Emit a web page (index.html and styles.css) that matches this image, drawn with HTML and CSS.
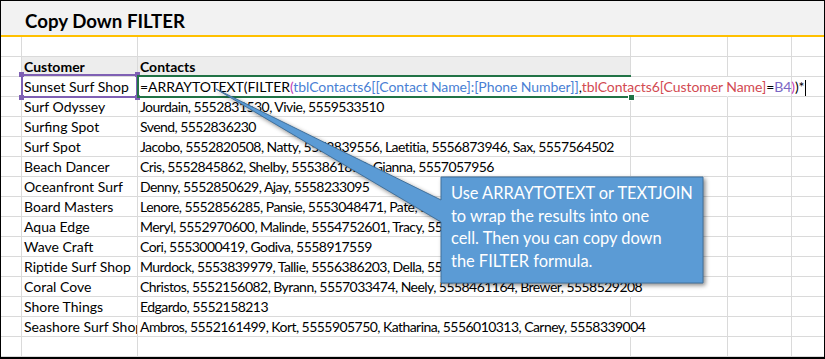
FILE: index.html
```html
<!DOCTYPE html>
<html>
<head>
<meta charset="utf-8">
<link rel="stylesheet" href="styles.css">
</head>
<body>
<div class="sheet">
  <div class="title">Copy Down FILTER</div>
  <div class="grid">
    <div class="row"><div class="c a"></div><div class="c b"></div><div class="c cc"></div><div class="c d"></div><div class="c e"></div><div class="c f"></div></div>
    <div class="row head"><div class="c a"></div><div class="c b">Customer</div><div class="c cc">Contacts</div><div class="c d"></div><div class="c e"></div><div class="c f"></div></div>
    <div class="row"><div class="c a"></div><div class="c b">Sunset Surf Shop</div><div class="c cc spill"><span class="formula">=ARRAYTOTEXT(FILTER<span class="pk">(</span><span class="bl">tblContacts6[[Contact Name]:[Phone Number]]</span>,<span class="rd">tblContacts6[Customer Name]</span>=<span class="pu">B4</span><span class="pk">)</span>)*</span><span class="cursor"></span></div><div class="c d spill"></div><div class="c e"></div><div class="c f"></div></div>
    <div class="row"><div class="c a"></div><div class="c b">Surf Odyssey</div><div class="c cc">Jourdain, 5552831530, Vivie, 5559533510</div><div class="c d"></div><div class="c e"></div><div class="c f"></div></div>
    <div class="row"><div class="c a"></div><div class="c b">Surfing Spot</div><div class="c cc">Svend, 5552836230</div><div class="c d"></div><div class="c e"></div><div class="c f"></div></div>
    <div class="row"><div class="c a"></div><div class="c b">Surf Spot</div><div class="c cc">Jacobo, 5552820508, Natty, 5552839556, Laetitia, 5556873946, Sax, 5557564502</div><div class="c d"></div><div class="c e"></div><div class="c f"></div></div>
    <div class="row"><div class="c a"></div><div class="c b">Beach Dancer</div><div class="c cc">Cris, 5552845862, Shelby, 5553861853, Gianna, 5557057956</div><div class="c d"></div><div class="c e"></div><div class="c f"></div></div>
    <div class="row"><div class="c a"></div><div class="c b">Oceanfront Surf</div><div class="c cc">Denny, 5552850629, Ajay, 5558233095</div><div class="c d"></div><div class="c e"></div><div class="c f"></div></div>
    <div class="row"><div class="c a"></div><div class="c b">Board Masters</div><div class="c cc">Lenore, 5552856285, Pansie, 5553048471, Pate, 5557220436</div><div class="c d"></div><div class="c e"></div><div class="c f"></div></div>
    <div class="row"><div class="c a"></div><div class="c b">Aqua Edge</div><div class="c cc">Meryl, 5552970600, Malinde, 5554752601, Tracy, 5557703352</div><div class="c d"></div><div class="c e"></div><div class="c f"></div></div>
    <div class="row"><div class="c a"></div><div class="c b">Wave Craft</div><div class="c cc">Cori, 5553000419, Godiva, 5558917559</div><div class="c d"></div><div class="c e"></div><div class="c f"></div></div>
    <div class="row"><div class="c a"></div><div class="c b">Riptide Surf Shop</div><div class="c cc">Murdock, 5553839979, Tallie, 5556386203, Della, 5557120498</div><div class="c d"></div><div class="c e"></div><div class="c f"></div></div>
    <div class="row"><div class="c a"></div><div class="c b">Coral Cove</div><div class="c cc spill">Christos, 5552156082, Byrann, 5557033474, Neely, 5558461164, Brewer, 5558529208</div><div class="c d"></div><div class="c e"></div><div class="c f"></div></div>
    <div class="row"><div class="c a"></div><div class="c b">Shore Things</div><div class="c cc">Edgardo, 5552158213</div><div class="c d"></div><div class="c e"></div><div class="c f"></div></div>
    <div class="row"><div class="c a"></div><div class="c b">Seashore Surf Shop</div><div class="c cc spill">Ambros, 5552161499, Kort, 5555905750, Katharina, 5556010313, Carney, 5558339004</div><div class="c d"></div><div class="c e"></div><div class="c f"></div></div>
    <div class="row"><div class="c a"></div><div class="c b"></div><div class="c cc"></div><div class="c d"></div><div class="c e"></div><div class="c f"></div></div>
  </div>

  <div class="sel-b">
    <span class="h h-tl"></span><span class="h h-tr"></span><span class="h h-bl"></span><span class="h h-br"></span>
  </div>
  <div class="sel-c"><span class="gh"></span></div>

  <svg class="callout-shape" width="825" height="359" viewBox="0 0 825 359">
    <path d="M216 89 L441 200 L441 177 L703 177 L703 283 L441 283 L441 222 Z" fill="#5b9bd5" stroke="#41719c" stroke-width="1"/>
  </svg>
  <div class="callout-text">Use ARRAYTOTEXT or TEXTJOIN<br>to wrap the results into one<br>cell. Then you can copy down<br>the FILTER formula.</div>
</div>
</body>
</html>
```

FILE: styles.css
```css
* { box-sizing: border-box; }
html, body { margin: 0; padding: 0; background: #fff; }
.sheet {
  position: relative;
  width: 825px;
  height: 359px;
  border: 1px solid #000;
  border-bottom-width: 2px;
  overflow: hidden;
  font-family: "Lato", "Open Sans", sans-serif;
  font-size: 14px;
  color: #000;
}
.title {
  height: 36px;
  background: #f2f2f2;
  border-bottom: 2px solid #ffc000;
  padding-left: 24px;
  padding-top: 7px;
  font-size: 18.7px;
  font-weight: 700;
  line-height: 27px;
}
.row {
  display: grid;
  grid-template-columns: 21px 116px 493px 97px 64px 1fr;
  height: 20px;
}
.c {
  border-right: 1px solid #dadada;
  border-bottom: 1px solid #dadada;
  height: 20px;
  line-height: 20px;
  padding-left: 2px;
  white-space: nowrap;
  overflow: hidden;
}
.c.f { border-right: none; }
.c.cc {
  overflow: visible;
  position: relative;
  z-index: 1;
  letter-spacing: -0.55px;
}
.c.spill { border-right-color: transparent; }
.head .b, .head .cc { background: #ededed; font-weight: 700; letter-spacing: 0; }
.formula { display: inline-block; letter-spacing: -0.07px; }
.pk { color: #c23ab8; }
.bl { color: #4a7fd4; }
.rd { color: #d24a52; }
.pu { color: #7a66c4; }
.cursor {
  display: inline-block;
  width: 1px;
  height: 16px;
  background: #000;
  vertical-align: middle;
  margin-left: 1px;
}
.sel-b {
  position: absolute;
  left: 20px;
  top: 73px;
  width: 117px;
  height: 24px;
  border: 2px solid #7f60b4;
  z-index: 2;
}
.h {
  position: absolute;
  width: 5px;
  height: 5px;
  background: #7f60b4;
}
.h-tl { left: -4px; top: -4px; }
.h-tr { right: -4px; top: -4px; }
.h-bl { left: -4px; bottom: -4px; }
.h-br { right: -4px; bottom: -4px; }
.sel-c {
  position: absolute;
  left: 136px;
  top: 74px;
  width: 494px;
  height: 23px;
  border: 2px solid #217346;
  border-right: none;
  z-index: 2;
}
.gh {
  position: absolute;
  right: -3px;
  bottom: -4px;
  width: 5px;
  height: 5px;
  background: #217346;
  outline: 1px solid #fff;
}
.callout-shape {
  position: absolute;
  left: -1px;
  top: -1px;
  z-index: 3;
  filter: drop-shadow(2px 2px 2px rgba(0,0,0,0.45));
}
.callout-text {
  position: absolute;
  left: 450px;
  top: 181px;
  z-index: 4;
  color: #fff;
  font-size: 16.4px;
  line-height: 22.6px;
  white-space: nowrap;
}
```
